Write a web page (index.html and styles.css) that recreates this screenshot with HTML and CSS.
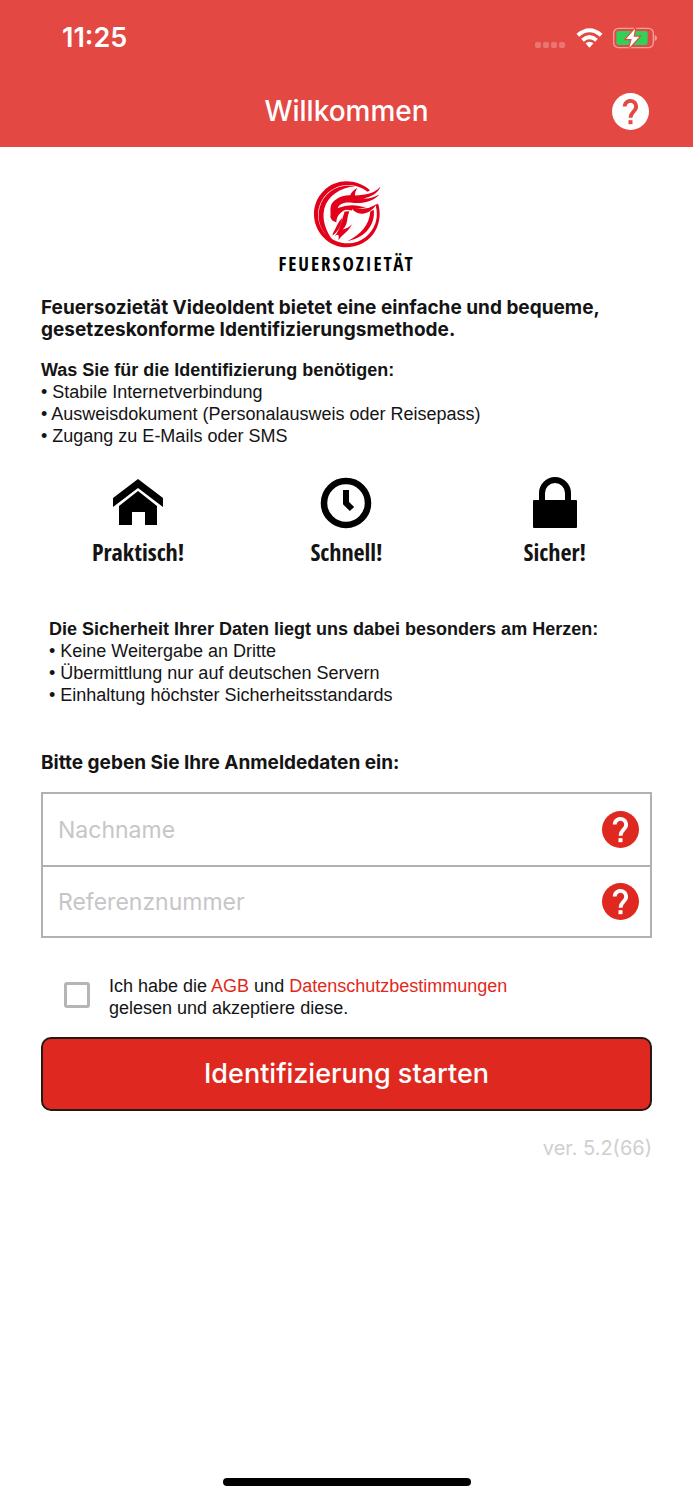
FILE: index.html
```html
<!DOCTYPE html>
<html lang="de">
<head>
<meta charset="utf-8">
<meta name="viewport" content="width=device-width, initial-scale=1">
<title>Willkommen</title>
<link rel="stylesheet" href="styles.css">
</head>
<body>
<svg class="defs" width="0" height="0" aria-hidden="true">
  <symbol id="question" viewBox="0 0 37 37">
    <path d="M12.700 13.600a5.700 5.700 0 1 1 9.800 3.900c-2 2.200-4 3.500-4 7.200" fill="none" stroke="currentColor" stroke-width="3.800"/>
    <rect x="16.500" y="27.200" width="4" height="4" fill="currentColor"/>
  </symbol>
</svg>
<header class="top">
  <div class="status">
    <span class="time">11:25</span>
    <div class="indicators">
      <span class="dots"><i></i><i></i><i></i><i></i></span>
      <svg class="wifi" viewBox="0 0 80 60" aria-hidden="true">
        <path d="M1 17Q40-16 79 17l-8 9Q40 0 9 26Z" fill="#fff"/>
        <path d="M15 32Q40 10 65 32l-8 9Q40 27 23 41Z" fill="#fff"/>
        <path d="M28 46q12-10 24 0L40 59Z" fill="#fff"/>
      </svg>
      <svg class="battery" viewBox="0 0 132 66" aria-hidden="true">
        <rect x="2" y="4" width="119" height="58" rx="15" fill="none" stroke="#f0a29f" stroke-width="4"/>
        <path d="M125 23q7 4 7 10t-7 10Z" fill="#f0a29f"/>
        <rect x="10" y="12" width="94" height="42" rx="7" fill="#30d158"/>
        <path d="M66 5 39 36h17l-7 26 30-33H62Z" fill="#fff" stroke="#e34842" stroke-width="7" paint-order="stroke"/>
      </svg>
    </div>
  </div>
  <div class="titlebar">
    <h1>Willkommen</h1>
    <button class="help help-light" type="button" aria-label="Hilfe"><svg aria-hidden="true"><use href="#question"/></svg></button>
  </div>
</header>
<main>
  <div class="brand">
    <svg class="emblem" viewBox="150 30 222 206" aria-hidden="true">
      <g fill="#e2001a">
        <path d="M330 60C288 24 227 24 190 63C152 101 153 163 190 201C228 242 292 240 330 203C356 177 366 136 354 100L347 105C356 139 348 171 323 195C288 229 232 227 198 193C166 160 166 107 199 72C232 39 284 34 323 65Z"/>
        <path d="M286 48C240 38 192 64 179 111C168 152 185 189 217 209C197 180 185 149 193 115C203 77 240 52 286 48Z"/>
        <path d="M341 119C347 158 320 203 262 213C304 192 327 165 331 124Z"/>
        <path d="M361 50C341 72 319 74 285 76C259 74 235 78 217 98C207 112 214 129 211 140C214 151 221 155 229 156C230 137 239 129 252 121C272 111 292 121 322 110C300 112 288 101 260 107C247 108 241 113 233 114C240 98 257 96 277 98C310 102 344 92 358 72C340 83 326 85 310 85C332 81 356 69 361 50Z"/>
        <path d="M292 53C281 60 274 66 270 77L285 78C284 69 287 62 292 53ZM258 110L280 108L276 121L256 118ZM268 123C258 148 266 160 248 178C262 174 268 170 276 162C266 184 247 192 235 210C239 194 234 189 223 199C240 180 245 150 254 124ZM218 196C239 180 241 165 247 143C234 155 230 171 218 191Z"/>
        <path d="M278 119C300 139 329 134 351 101C331 113 315 121 278 112Z"/>
      </g>
    </svg>
    <span class="wordmark">FEUERSOZIETÄT</span>
  </div>
  <h2 class="lead">Feuersozietät VideoIdent bietet eine einfache und bequeme, gesetzeskonforme Identifizierungsmethode.</h2>
  <section class="needs">
    <h2>Was Sie für die Identifizierung benötigen:</h2>
    <ul>
      <li>Stabile Internetverbindung</li>
      <li>Ausweisdokument (Personalausweis oder Reisepass)</li>
      <li>Zugang zu E-Mails oder SMS</li>
    </ul>
  </section>
  <section class="features">
    <div class="feature">
      <svg viewBox="0 0 52 52" aria-hidden="true"><path d="M26 2 51 21v9L26 11 1 30v-9ZM26 14l19 15v19H33V35H20v13H7V29Z"/></svg>
      <span>Praktisch!</span>
    </div>
    <div class="feature">
      <svg viewBox="0 0 52 52" aria-hidden="true"><circle cx="26" cy="26" r="22" fill="none" stroke="#000" stroke-width="6.500"/><path d="M26 13v13l6 6" fill="none" stroke="#000" stroke-width="6"/></svg>
      <span>Schnell!</span>
    </div>
    <div class="feature">
      <svg viewBox="0 0 52 52" aria-hidden="true"><rect x="4" y="23" width="44" height="28" rx="1"/><path d="M13 25V16a13 13 0 0 1 26 0v9" fill="none" stroke="#000" stroke-width="6"/></svg>
      <span>Sicher!</span>
    </div>
  </section>
  <section class="security">
    <h2>Die Sicherheit Ihrer Daten liegt uns dabei besonders am Herzen:</h2>
    <ul>
      <li>Keine Weitergabe an Dritte</li>
      <li>Übermittlung nur auf deutschen Servern</li>
      <li>Einhaltung höchster Sicherheitsstandards</li>
    </ul>
  </section>
  <form class="login">
    <h2 class="lead">Bitte geben Sie Ihre Anmeldedaten ein:</h2>
    <div class="fields">
      <div class="field">
        <input type="text" placeholder="Nachname" aria-label="Nachname">
        <button class="help" type="button" aria-label="Hilfe zum Nachnamen"><svg aria-hidden="true"><use href="#question"/></svg></button>
      </div>
      <div class="field">
        <input type="text" placeholder="Referenznummer" aria-label="Referenznummer">
        <button class="help" type="button" aria-label="Hilfe zur Referenznummer"><svg aria-hidden="true"><use href="#question"/></svg></button>
      </div>
    </div>
    <div class="consent">
      <input type="checkbox" id="accept">
      <label for="accept">Ich habe die <a href="#agb">AGB</a> und <a href="#datenschutz">Datenschutzbestimmungen</a><br>gelesen und akzeptiere diese.</label>
    </div>
    <button class="start" type="submit">Identifizierung starten</button>
  </form>
  <p class="version">ver. 5.2(66)</p>
</main>
<div class="home"></div>
</body>
</html>
```
FILE: styles.css
```css
* { box-sizing: border-box; }
body {
  margin: 0;
  min-height: 100vh;
  display: flex;
  flex-direction: column;
  background: #fff;
  color: #141414;
  font: 18px/22px "Liberation Sans", Arial, sans-serif;
}
h1, h2, p, ul { margin: 0; padding: 0; }
h2 { font-size: 18px; line-height: 22px; }
ul { list-style: none; }
li::before { content: "• "; }
a { color: #df2920; text-decoration: none; }
button { border: 0; padding: 0; cursor: pointer; }
.defs { position: absolute; }

.top { background: #e34842; color: #fff; padding-bottom: 1px; font-family: Inter, sans-serif; }
.status { display: flex; justify-content: space-between; align-items: center; height: 76px; padding: 0 36px 0 62px; }
.time { font-size: 27px; font-weight: 600; }
.indicators { display: flex; align-items: center; }
.dots { display: flex; gap: 2px; margin: 14px 11px 0 0; }
.dots i { width: 6px; height: 6px; border-radius: 2px; background: #ea7672; }
.wifi { width: 27px; height: 20px; margin-right: 10px; }
.battery { width: 44px; height: 22px; }
.titlebar { display: grid; grid-template-columns: 1fr auto 1fr; align-items: center; padding: 0 44px; height: 70px; }
h1 { grid-column: 2; font-size: 28px; line-height: 34px; font-weight: 500; }
.help { flex: none; display: block; width: 37px; height: 37px; border-radius: 50%; background: #df2920; color: #fff; }
.help svg { display: block; width: 37px; height: 37px; }
.help-light { justify-self: end; background: #fff; color: #e34842; }

main { flex: 1; padding: 33px 41px 0; }
.brand { display: flex; flex-direction: column; align-items: center; }
.emblem { width: 74px; height: 69px; }
.wordmark { margin: 4px 0 22px; color: #000; font: bold 19px/22px "Liberation Sans Narrow", "Open Sans Condensed", "Roboto Condensed", sans-serif; letter-spacing: 2px; }
.lead { font-family: Inter, sans-serif; font-size: 19px; font-weight: 700; }
.needs { margin-top: 18px; }
.features { display: grid; grid-template-columns: repeat(3, 1fr); margin: 30px -7px 0; }
.feature { display: flex; flex-direction: column; align-items: center; gap: 8px; font: bold 24px/30px "Liberation Sans Narrow", "Open Sans Condensed", "Roboto Condensed", sans-serif; }
.feature svg { width: 52px; height: 52px; }
.security { margin: 51px 0 0 8px; }
.login { margin-top: 46px; }
.fields { margin-top: 18px; border: 2px solid #b1b1b1; }
.field { display: flex; align-items: center; height: 71px; padding: 0 11px 0 15px; }
.field + .field { border-top: 2px solid #b1b1b1; }
.field input { flex: 1; min-width: 0; padding: 0; border: 0; outline: 0; background: none; font: 23px/32px Inter, sans-serif; color: #141414; }
.field input::placeholder { color: #c6c6c8; opacity: 1; }
.consent { display: flex; align-items: center; gap: 19px; margin: 37px 0 18px 23px; }
.consent input { appearance: none; flex: none; width: 26px; height: 26px; margin: 0 0 4px; border: 3px solid #b5b5b5; border-radius: 3px; }
.consent input:checked { background: #df2920; }
.start { display: block; width: 100%; height: 74px; border: 2px solid #251918; border-radius: 10px; background: #df2920; color: #fff; font: 500 27px/34px Inter, sans-serif; }
.version { margin-top: 25px; text-align: right; color: #cfcfcf; font: 20px/24px Inter, sans-serif; }
.home { width: 248px; height: 8px; margin: 0 auto 14px; border-radius: 4px; background: #000; }
```
